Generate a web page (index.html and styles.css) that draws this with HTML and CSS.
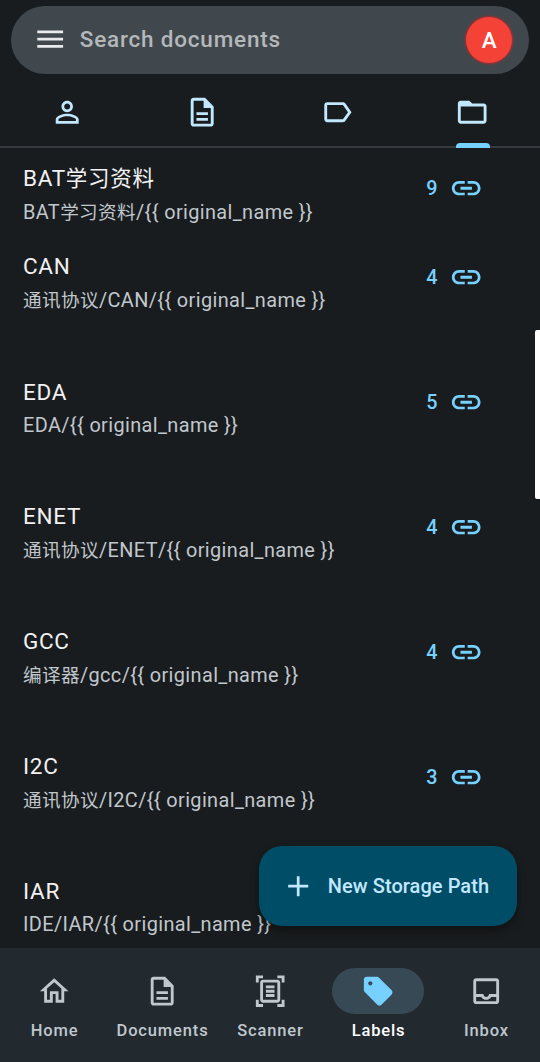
FILE: index.html
```html
<!DOCTYPE html>
<html lang="en">
<head>
<meta charset="utf-8">
<title>Labels</title>
<link rel="stylesheet" href="styles.css">
</head>
<body>
<div class="app">
  <header class="header">
    <div class="search">
      <svg class="icon menu" viewBox="0 0 24 24"><path d="M3 18h18v-1.9H3V18zm0-5.05h18v-1.9H3v1.9zM3 6v1.9h18V6H3z"/></svg>
      <span class="search-text">Search documents</span>
      <span class="avatar">A</span>
    </div>
    <nav class="tabs">
      <div class="tab"><svg class="icon" viewBox="0 0 24 24"><path d="M12 5.9c1.16 0 2.1.94 2.1 2.1s-.94 2.1-2.1 2.1S9.9 9.16 9.9 8s.94-2.1 2.1-2.1m0 9c2.97 0 6.1 1.46 6.1 2.1v1.1H5.9V17c0-.64 3.13-2.1 6.1-2.1M12 4C9.79 4 8 5.79 8 8s1.79 4 4 4 4-1.79 4-4-1.79-4-4-4zm0 9c-2.67 0-8 1.34-8 4v3h16v-3c0-2.66-5.33-4-8-4z"/></svg></div>
      <div class="tab"><svg class="icon" viewBox="0 0 24 24"><path d="M8 16h8v2H8zm0-4h8v2H8zm6-10H6c-1.1 0-2 .9-2 2v16c0 1.1.89 2 1.99 2H18c1.1 0 2-.9 2-2V8l-6-6zm4 18H6V4h7v5h5v11z"/></svg></div>
      <div class="tab"><svg class="icon" viewBox="0 0 24 24"><path d="M17.63 5.84C17.27 5.33 16.67 5 16 5L5 5.01C3.9 5.01 3 5.9 3 7v10c0 1.1.9 1.99 2 1.99L16 19c.67 0 1.27-.33 1.63-.84L22 12l-4.37-6.16zM16 17H5V7h11l3.55 5L16 17z"/></svg></div>
      <div class="tab active"><svg class="icon" viewBox="0 0 24 24"><path d="M20 6h-8l-2-2H4c-1.1 0-1.99.9-1.99 2L2 18c0 1.1.9 2 2 2h16c1.1 0 2-.9 2-2V8c0-1.1-.9-2-2-2zm0 12H4V8h16v10z"/></svg></div>
    </nav>
  </header>

  <svg class="defs" width="0" height="0"><symbol id="link" viewBox="0 0 24 24"><path d="M3.9 12c0-1.71 1.39-3.1 3.1-3.1h4V7H7c-2.76 0-5 2.24-5 5s2.24 5 5 5h4v-1.9H7c-1.71 0-3.1-1.39-3.1-3.1zM8 13h8v-2H8v2zm9-6h-4v1.9h4c1.71 0 3.1 1.39 3.1 3.1s-1.39 3.1-3.1 3.1h-4V17h4c2.76 0 5-2.24 5-5s-2.24-5-5-5z"/></symbol></svg>

  <main class="list">
    <div class="row first">
      <div class="info"><div class="title">BAT<span class="cjk" lang="zh">学习资料</span></div><div class="path">BAT<span class="cjk" lang="zh">学习资料</span>/{{ original_name }}</div></div>
      <div class="count">9<svg class="icon"><use href="#link"/></svg></div>
    </div>
    <div class="row tall">
      <div class="info"><div class="title">CAN</div><div class="path"><span class="cjk" lang="zh">通讯协议</span>/CAN/{{ original_name }}</div></div>
      <div class="count">4<svg class="icon"><use href="#link"/></svg></div>
    </div>
    <div class="row latin">
      <div class="info"><div class="title">EDA</div><div class="path">EDA/{{ original_name }}</div></div>
      <div class="count">5<svg class="icon"><use href="#link"/></svg></div>
    </div>
    <div class="row">
      <div class="info"><div class="title">ENET</div><div class="path"><span class="cjk" lang="zh">通讯协议</span>/ENET/{{ original_name }}</div></div>
      <div class="count">4<svg class="icon"><use href="#link"/></svg></div>
    </div>
    <div class="row">
      <div class="info"><div class="title">GCC</div><div class="path"><span class="cjk" lang="zh">编译器</span>/gcc/{{ original_name }}</div></div>
      <div class="count">4<svg class="icon"><use href="#link"/></svg></div>
    </div>
    <div class="row">
      <div class="info"><div class="title">I2C</div><div class="path"><span class="cjk" lang="zh">通讯协议</span>/I2C/{{ original_name }}</div></div>
      <div class="count">3<svg class="icon"><use href="#link"/></svg></div>
    </div>
    <div class="row latin">
      <div class="info"><div class="title">IAR</div><div class="path">IDE/IAR/{{ original_name }}</div></div>
    </div>
  </main>

  <div class="scrollbar"></div>
  <div class="fab">
    <svg class="icon" viewBox="0 0 24 24"><path d="M19 12.95h-6.05V19h-1.9v-6.05H5v-1.9h6.05V5h1.9v6.05H19v1.9z"/></svg>
    <span>New Storage Path</span>
  </div>

  <footer class="bottom">
    <div class="dest"><div class="pill"><svg class="icon" viewBox="0 0 24 24"><path d="M12 5.69l5 4.5V18h-2v-6H9v6H7v-7.81l5-4.5M12 3L2 12h3v8h6v-6h2v6h6v-8h3L12 3z"/></svg></div><span>Home</span></div>
    <div class="dest"><div class="pill"><svg class="icon" viewBox="0 0 24 24"><path d="M8 16h8v2H8zm0-4h8v2H8zm6-10H6c-1.1 0-2 .9-2 2v16c0 1.1.89 2 1.99 2H18c1.1 0 2-.9 2-2V8l-6-6zm4 18H6V4h7v5h5v11z"/></svg></div><span>Documents</span></div>
    <div class="dest"><div class="pill"><svg class="icon" viewBox="0 0 24 24"><path d="M7 3H4v3H2V1h5v2zm15 3V1h-5v2h3v3h2zM7 21H4v-3H2v5h5v-2zm13-3v3h-3v2h5v-5h-2zm-1 0c0 1.1-.9 2-2 2H7c-1.1 0-2-.9-2-2V6c0-1.1.9-2 2-2h10c1.1 0 2 .9 2 2v12zM17 6H7v12h10V6zm-2 2H9v2h6V8zm0 3H9v2h6v-2zm0 3H9v2h6v-2z"/></svg></div><span>Scanner</span></div>
    <div class="dest selected"><div class="pill"><svg class="icon" viewBox="0 0 24 24"><path d="M21.41 11.41l-8.83-8.83C12.21 2.21 11.7 2 11.17 2H4c-1.1 0-2 .9-2 2v7.17c0 .53.21 1.04.59 1.41l8.83 8.83c.78.78 2.05.78 2.83 0l7.17-7.17c.78-.78.78-2.04-.01-2.83zM6.5 8C5.67 8 5 7.33 5 6.5S5.67 5 6.5 5 8 5.67 8 6.5 7.33 8 6.5 8z"/></svg></div><span>Labels</span></div>
    <div class="dest"><div class="pill"><svg class="icon" viewBox="0 0 24 24"><path d="M19 3H5c-1.1 0-2 .9-2 2v14c0 1.1.9 2 2 2h14c1.1 0 2-.9 2-2V5c0-1.1-.9-2-2-2zm0 16H5v-3h3.56c.69 1.19 1.97 2 3.45 2s2.75-.81 3.45-2H19v3zm0-5h-4.99c0 1.1-.9 2-2 2s-2-.9-2-2H5V5h14v9z"/></svg></div><span>Inbox</span></div>
  </footer>
</div>
</body>
</html>
```
FILE: styles.css
```css
* { box-sizing: border-box; }
body {
  margin: 0;
  background: #191c1e;
  font-family: Roboto, "Noto Sans CJK SC", sans-serif;
}
.app {
  position: relative;
  display: flex;
  flex-direction: column;
  height: 1062px;
  overflow: hidden;
}
.defs { position: absolute; }
.icon {
  display: block;
  flex: none;
  width: 34.4px;
  height: 34.4px;
  fill: currentColor;
}
.header {
  flex: none;
  height: 148px;
  padding-top: 5.5px;
}
.search {
  display: flex;
  align-items: center;
  height: 68px;
  margin: 0 11.4px;
  padding: 0 17px 0 22px;
  border-radius: 34px;
  background: #41484d;
  color: #e8eaed;
}
.search-text {
  flex: 1;
  margin-left: 12px;
  padding-bottom: 1px;
  font-size: 22.5px;
  font-weight: 500;
  letter-spacing: 0.8px;
  line-height: 30px;
  color: #b4b8bb;
}
.avatar {
  width: 46px;
  height: 46px;
  border-radius: 50%;
  background: #f44336;
  box-shadow: 0 0 1px 1.5px #8a3438;
  color: #fff;
  font-size: 22.5px;
  font-weight: 500;
  line-height: 46px;
  padding-left: 1px;
  text-align: center;
}
.tabs {
  display: flex;
  height: 74px;
  border-bottom: 2px solid #34393d;
  color: #c2e8ff;
}
.tab {
  position: relative;
  display: flex;
  flex: 1;
  justify-content: center;
  padding-top: 21.5px;
}
.tab.active::after {
  content: "";
  position: absolute;
  bottom: -2px;
  left: 50.5px;
  width: 34px;
  height: 4.5px;
  border-radius: 4px 4px 0 0;
  background: #76d1ff;
}
.list {
  flex: 1;
  min-height: 0;
  overflow: hidden;
  padding: 13px 58px 0 23px;
}
.row {
  display: flex;
  justify-content: space-between;
  height: 125px;
}
.row.first { height: 88px; }
.row.tall { height: 126px; }
.row.latin { height: 124px; }
.title {
  height: 34px;
  font-size: 22.5px;
  letter-spacing: 0.7px;
  line-height: 34px;
  color: #f1f1f3;
}
.title .cjk { font-size: 21.5px; }
.path {
  margin-top: 1px;
  font-size: 19.9px;
  letter-spacing: 0.38px;
  line-height: 34px;
  color: #c0c7cd;
  white-space: nowrap;
}
.path .cjk { font-size: 18.6px; }
.row.latin .path { line-height: 32px; }
.count {
  display: flex;
  align-items: center;
  gap: 11px;
  height: 34px;
  margin: 10px -1px 0 0;
  font-size: 19.8px;
  font-weight: 500;
  letter-spacing: 0.14px;
  color: #76d1ff;
}
.row:not(.first) .count { margin-top: 11px; }
.row.latin .count { margin-top: 10px; }
.scrollbar {
  position: absolute;
  top: 330px;
  right: 0;
  width: 5px;
  height: 169px;
  border-radius: 2px 0 0 2px;
  background: #fff;
}
.fab {
  position: absolute;
  right: 23px;
  bottom: 136px;
  display: flex;
  align-items: center;
  gap: 12px;
  width: 257.6px;
  height: 80px;
  padding-left: 22px;
  border-radius: 23px;
  background: #004d67;
  box-shadow: 0 4px 8px rgba(0, 0, 0, 0.4);
  color: #c2e8ff;
  font-size: 20px;
  font-weight: 500;
  letter-spacing: 0.06px;
  white-space: nowrap;
}
.bottom {
  flex: none;
  display: flex;
  height: 114px;
  padding-top: 20px;
  background: #222a30;
  color: #c0c7cd;
}
.dest {
  display: flex;
  flex: 1 1 0;
  flex-direction: column;
  align-items: center;
  font-size: 16.5px;
  font-weight: 500;
  letter-spacing: 0.85px;
  line-height: 24px;
}
.dest span { padding-left: 1px; }
.pill {
  display: flex;
  align-items: center;
  justify-content: center;
  width: 91.4px;
  height: 46px;
  margin-bottom: 5px;
  border-radius: 23px;
}
.selected { color: #fff; }
.selected .pill {
  background: #384956;
  color: #76d1ff;
}
```
